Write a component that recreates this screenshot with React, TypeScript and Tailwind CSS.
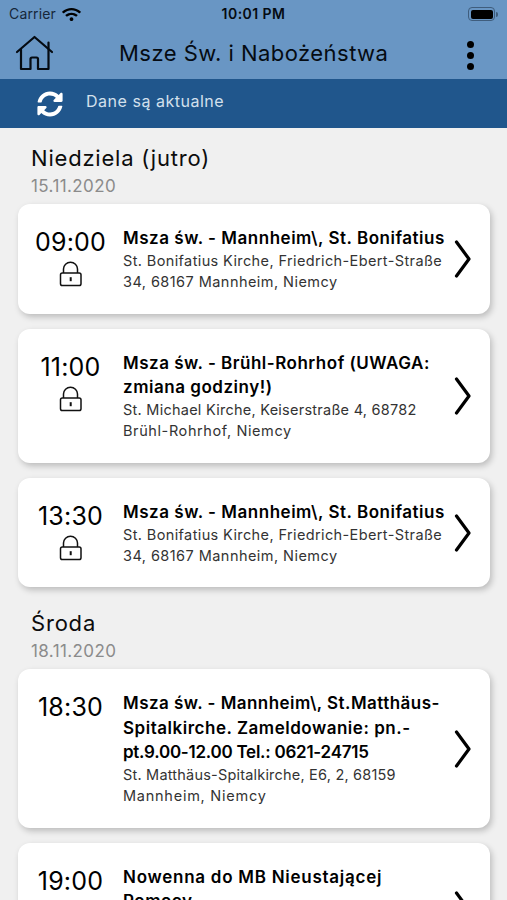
import { FaSyncAlt, FaWifi } from 'react-icons/fa';

type Line = {
  text: string;
  tracking: string;
};

type Mass = {
  time: string;
  locked: boolean;
  title: Line[];
  address: Line[];
};

type Day = {
  name: string;
  date: string;
  masses: Mass[];
};

const bonifatiusAddress: Line[] = [
  {
    text: 'St. Bonifatius Kirche, Friedrich-Ebert-Straße',
    tracking: 'tracking-[0.38px]',
  },
  { text: '34, 68167 Mannheim, Niemcy', tracking: 'tracking-[0.45px]' },
];

const days: Day[] = [
  {
    name: 'Niedziela (jutro)',
    date: '15.11.2020',
    masses: [
      {
        time: '09:00',
        locked: true,
        title: [
          {
            text: 'Msza św. - Mannheim\\, St. Bonifatius',
            tracking: 'tracking-[0.52px]',
          },
        ],
        address: bonifatiusAddress,
      },
      {
        time: '11:00',
        locked: true,
        title: [
          {
            text: 'Msza św. - Brühl-Rohrhof (UWAGA:',
            tracking: 'tracking-[0.5px]',
          },
          { text: 'zmiana godziny!)', tracking: 'tracking-[0.52px]' },
        ],
        address: [
          {
            text: 'St. Michael Kirche, Keiserstraße 4, 68782',
            tracking: 'tracking-[0.25px]',
          },
          { text: 'Brühl-Rohrhof, Niemcy', tracking: 'tracking-[0.6px]' },
        ],
      },
      {
        time: '13:30',
        locked: true,
        title: [
          {
            text: 'Msza św. - Mannheim\\, St. Bonifatius',
            tracking: 'tracking-[0.52px]',
          },
        ],
        address: bonifatiusAddress,
      },
    ],
  },
  {
    name: 'Środa',
    date: '18.11.2020',
    masses: [
      {
        time: '18:30',
        locked: false,
        title: [
          {
            text: 'Msza św. - Mannheim\\, St.Matthäus-',
            tracking: 'tracking-[0.46px]',
          },
          {
            text: 'Spitalkirche. Zameldowanie: pn.-',
            tracking: 'tracking-[0.52px]',
          },
          {
            text: 'pt.9.00-12.00 Tel.: 0621-24715',
            tracking: 'tracking-[-0.25px]',
          },
        ],
        address: [
          {
            text: 'St. Matthäus-Spitalkirche, E6, 2, 68159',
            tracking: 'tracking-[0.2px]',
          },
          { text: 'Mannheim, Niemcy', tracking: 'tracking-[0.75px]' },
        ],
      },
      {
        time: '19:00',
        locked: false,
        title: [
          { text: 'Nowenna do MB Nieustającej', tracking: 'tracking-[0.74px]' },
          { text: 'Pomocy', tracking: 'tracking-[0.5px]' },
        ],
        address: [
          { text: 'St. Bonifatius Kirche,', tracking: 'tracking-[0.38px]' },
          { text: 'Mannheim, Niemcy', tracking: 'tracking-[0.75px]' },
        ],
      },
    ],
  },
];

function HomeIcon() {
  return (
    <svg
      className="mb-[2px] h-[36px] w-[38px]"
      viewBox="0 0 38 36"
      fill="none"
      stroke="#050b12"
      strokeWidth="2.2"
      strokeLinecap="round"
      strokeLinejoin="round"
    >
      <path d="M2 17 19.500 2 37 17" />
      <path d="M6 14.500V34H15.500V24q0-1.500 1.500-1.500h4.500q1.500 0 1.500 1.500V34H33.500V7.500" />
    </svg>
  );
}

function LockIcon() {
  return (
    <svg
      className="mt-[3px] h-[26px] w-[24px]"
      viewBox="0 0 24 26"
      fill="none"
      stroke="#111"
      strokeWidth="1.500"
    >
      <rect x="1.500" y="12" width="20.500" height="12.500" rx="1.800" />
      <path d="M4.500 12V8a7 6.700 0 0 1 14 0v4" />
      <path d="M11.700 16.200v4" strokeWidth="2" />
    </svg>
  );
}

function MassCard({ mass }: { mass: Mass }) {
  return (
    <div className="flex shrink-0 items-center rounded-[12px] bg-white py-[22px] shadow-[2px_3px_6px_rgba(0,0,0,0.22)]">
      <div className="flex w-[105px] shrink-0 flex-col items-center self-stretch">
        <span className="text-[25px] leading-[32px] tracking-[0.2px] text-black">
          {mass.time}
        </span>
        {mass.locked && <LockIcon />}
      </div>
      <div className="flex-1 whitespace-nowrap">
        {mass.title.map((line) => (
          <p
            key={line.text}
            className={`text-[17px] font-semibold leading-[24.3px] text-black ${line.tracking}`}
          >
            {line.text}
          </p>
        ))}
        {/* -mb keeps the card height while the address sits a pixel lower */}
        <div className="-mb-px pt-px">
          {mass.address.map((line) => (
            <p
              key={line.text}
              className={`text-[14.5px] leading-[20.7px] text-[#333] ${line.tracking}`}
            >
              {line.text}
            </p>
          ))}
        </div>
      </div>
      <svg
        className="mr-[18px] h-[38px] w-[18px] shrink-0"
        viewBox="0 0 18 38"
        fill="none"
        stroke="#000"
        strokeWidth="3.2"
        strokeLinecap="round"
        strokeLinejoin="round"
      >
        <path d="M2.500 2 15 19 2.500 36" />
      </svg>
    </div>
  );
}

export default function App() {
  return (
    <div className="flex h-[900px] w-[507px] flex-col overflow-hidden bg-[#f0f0f0] font-['Inter',sans-serif]">
      <header className="h-[79px] shrink-0 bg-[#6996c4] text-[#050b12]">
        {/* status bar */}
        <div className="flex h-[28px] items-center px-[9px] text-[14px] leading-none">
          <div className="flex flex-1 items-center gap-[6px]">
            <span className="tracking-[0.15px] text-[#16273a]">Carrier</span>
            <FaWifi className="h-[15px] w-[19px] text-black" />
          </div>
          <span className="font-semibold tracking-[0.45px]">10:01 PM</span>
          <div className="flex flex-1 items-center justify-end">
            <div className="h-[14px] w-[27px] rounded-[4px] border border-[#3f5d7d] p-[1.500px]">
              <div className="h-full w-full rounded-[2px] bg-black" />
            </div>
            <div className="ml-px h-[5px] w-[2px] rounded-r-full bg-[#3f5d7d]" />
          </div>
        </div>
        <div className="flex h-[51px] items-center pl-[15px] pr-[33px]">
          <HomeIcon />
          <h1 className="flex-1 pl-[66px] text-[22px] tracking-[0.46px]">
            Msze Św. i Nabożeństwa
          </h1>
          <div className="flex flex-col gap-[4px] pt-[4px]">
            <span className="h-[7px] w-[7px] rounded-full bg-black" />
            <span className="h-[7px] w-[7px] rounded-full bg-black" />
            <span className="h-[7px] w-[7px] rounded-full bg-black" />
          </div>
        </div>
      </header>

      <div className="flex h-[49px] shrink-0 items-center bg-[#20568c] pl-[37px]">
        <FaSyncAlt className="h-[26px] w-[26px] text-white" />
        <span className="pb-[5px] pl-[23px] text-[16px] tracking-[0.52px] text-[#d3e0ed]">
          Dane są aktualne
        </span>
      </div>

      <main className="flex flex-col pr-[17px] pl-[18px]">
        {days.map((day) => (
          <section
            key={day.name}
            className="mb-[6px] flex shrink-0 flex-col pt-[16px]"
          >
            <h2 className="pl-[13px] text-[22px] leading-[28px] tracking-[0.8px] text-[#0c0c0c]">
              {day.name}
            </h2>
            <p className="pl-[13px] text-[17px] leading-[28px] tracking-[0.4px] text-[#8b8b8b]">
              {day.date}
            </p>
            <div className="mt-[4px] flex flex-col gap-[15px]">
              {day.masses.map((mass) => (
                <MassCard key={mass.time} mass={mass} />
              ))}
            </div>
          </section>
        ))}
      </main>
    </div>
  );
}
